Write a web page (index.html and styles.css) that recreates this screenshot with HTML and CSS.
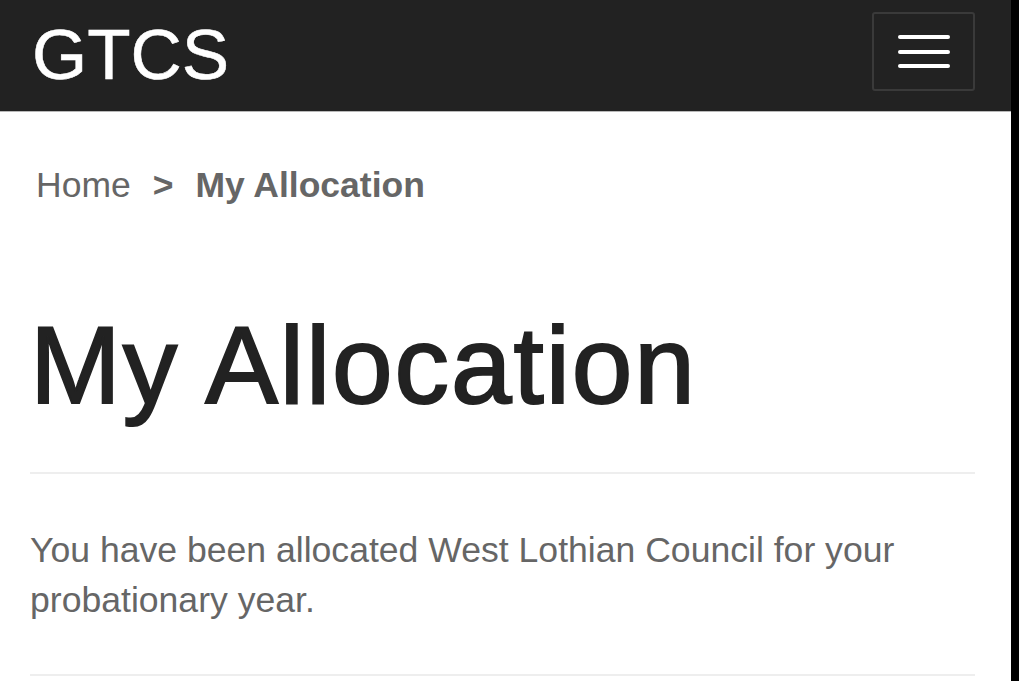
FILE: index.html
```html
<!DOCTYPE html>
<html lang="en">
<head>
<meta charset="utf-8">
<title>My Allocation - GTCS</title>
<link rel="stylesheet" href="styles.css">
</head>
<body>
<div class="frame">
  <div class="page">
    <header class="topbar">
      <a class="brand" href="#">GTCS</a>
      <button class="menu-toggle" type="button" aria-label="Menu">
        <span class="bar"></span>
        <span class="bar"></span>
        <span class="bar"></span>
      </button>
    </header>
    <main class="content">
      <nav class="breadcrumb">
        <a class="crumb" href="#">Home</a>
        <span class="sep">&gt;</span>
        <span class="crumb current">My Allocation</span>
      </nav>
      <h1 class="title">My Allocation</h1>
      <hr class="rule">
      <p class="message">You have been allocated West Lothian Council for your probationary year.</p>
      <hr class="rule">
    </main>
  </div>
  <div class="edge"></div>
</div>
</body>
</html>
```

FILE: styles.css
```css
html, body {
  margin: 0;
  padding: 0;
  height: 100%;
}
body {
  font-family: "Liberation Sans", Arial, Helvetica, sans-serif;
  background: #000;
  overflow: hidden;
}
.frame {
  display: flex;
  height: 100%;
}
.page {
  flex: 1;
  background: #fff;
  min-width: 0;
}
.edge {
  width: 8px;
  background: #000;
}
.topbar {
  height: 111px;
  background: #222222;
  border-bottom: 1px solid #b8b8b8;
  display: flex;
  justify-content: space-between;
  align-items: flex-start;
  padding: 0 36px 0 32px;
}
.brand {
  color: #fff;
  text-decoration: none;
  font-size: 71px;
  line-height: 71px;
  margin-top: 19px;
  -webkit-text-stroke: 0.5px #fff;
}
.menu-toggle {
  margin-top: 12px;
  width: 103px;
  height: 79px;
  box-sizing: border-box;
  background: transparent;
  border: 2px solid #3a3a3a;
  border-radius: 3px;
  padding: 0;
  display: flex;
  flex-direction: column;
  justify-content: center;
  align-items: center;
  gap: 10.5px;
}
.bar {
  display: block;
  width: 52px;
  height: 4px;
  border-radius: 2px;
  background: #fff;
}
.content {
  padding: 48px 36px 0 30px;
}
.breadcrumb {
  display: flex;
  align-items: baseline;
  font-size: 35.5px;
  line-height: 50px;
  color: #666;
  margin-left: 6px;
}
.crumb {
  color: #666;
  text-decoration: none;
}
.sep {
  font-weight: bold;
  margin: 0 22px 0 22px;
}
.current {
  font-weight: bold;
}
.title {
  margin: 96px 0 46px;
  font-size: 109px;
  line-height: 1.1;
  font-weight: normal;
  color: #222;
  letter-spacing: 1.9px;
  -webkit-text-stroke: 2px #222;
}
.rule {
  margin: 0;
  border: 0;
  height: 2px;
  background: #eeeeee;
}
.message {
  margin: 51px 0 49px;
  font-size: 35.6px;
  line-height: 50px;
  color: #666;
}
```
